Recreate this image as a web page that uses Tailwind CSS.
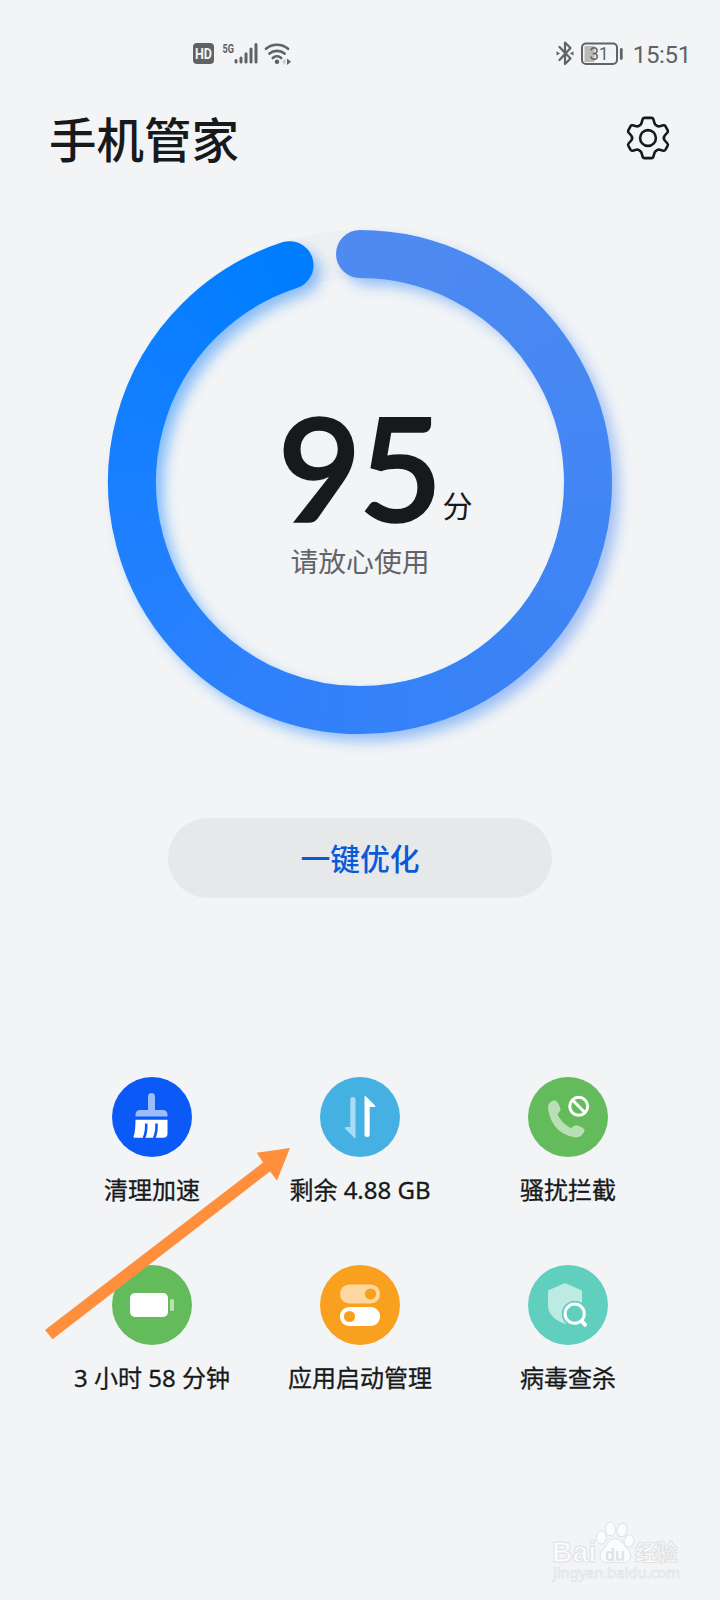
<!DOCTYPE html>
<html lang="zh-CN">
<head>
<meta charset="utf-8">
<title>手机管家</title>
<script src="https://cdn.jsdelivr.net/npm/@tailwindcss/browser@4"></script>
</head>
<body class="bg-[#f2f4f6]">
<div class="relative flex h-[1600px] w-[720px] flex-col overflow-hidden bg-[#f2f4f6] font-['Noto_Sans_CJK_SC',sans-serif] text-[#18191b]">

  <!-- Status bar -->
  <div class="flex h-[106px] items-center justify-between pr-[29px] pl-[192px] text-[#606265]">
    <svg class="h-8 w-[104px]" viewBox="0 0 104 32" fill="currentColor">
      <rect x="1" y="6" width="21" height="21" rx="4"/>
      <text x="11.5" y="22" text-anchor="middle" font-family="Roboto" font-weight="700" font-size="15" fill="#f2f4f6" textLength="17" lengthAdjust="spacingAndGlyphs">HD</text>
      <text x="30.500" y="15.500" font-family="Roboto" font-weight="700" font-size="13.500" textLength="11.500" lengthAdjust="spacingAndGlyphs">5G</text>
      <g stroke="currentColor" stroke-width="3" stroke-linecap="round"><path d="M44 25v-1.500M49 25v-4M54 25v-8.200M59 25V12M64 25V7.500"/></g>
      <g fill="none" stroke="currentColor" stroke-width="2.700" stroke-linecap="round"><path d="M74 11.800a17 17 0 0 1 22 0M77.500 16.600a11.500 11.500 0 0 1 15 0M80.800 21a6.500 6.500 0 0 1 8.400 0"/></g>
      <circle cx="85" cy="24.700" r="2.300"/>
      <path d="M95 21.500l4 3.200-4 3.200z"/><path d="M93.500 21.500l-3.500 3.200 3.500 3.200z" opacity=".3"/>
    </svg>
    <div class="flex items-center">
      <svg class="h-8 w-[70px]" viewBox="0 0 70 32" fill="none" stroke="currentColor" stroke-width="2.200">
        <path d="M6.500 10l11 11.500L12 27V5.500l5.500 5.500L6.500 23" stroke-linejoin="round" stroke-linecap="round"/>
        <path d="M3.500 14.300l3.600 2.100-3.600 2.100zM20.500 14.300l-3.600 2.100 3.600 2.100z" fill="currentColor" stroke="none"/>
        <rect x="31.500" y="9" width="10" height="16" fill="#b9babc" stroke="none"/>
        <rect x="29" y="6.500" width="35" height="20.500" rx="4" stroke-width="2"/>
        <path d="M68.300 12.500v9" stroke-width="2.800" stroke-linecap="round"/>
        <text x="46" y="22.800" text-anchor="middle" font-family="Roboto" font-size="18" fill="currentColor" stroke="none" textLength="19" lengthAdjust="spacingAndGlyphs">31</text>
      </svg>
      <span class="ml-[10px] pt-[3px] font-['Roboto'] text-[24px] leading-8 tracking-[-0.3px]">15:51</span>
    </div>
  </div>

  <!-- Header -->
  <div class="flex h-16 items-center justify-between pr-12 pl-[49px]">
    <h1 class="text-[47.500px] leading-[64px] font-medium">手机管家</h1>
    <svg class="h-12 w-12" viewBox="0 0 48 48" fill="none" stroke="#18191b" stroke-width="2.600" stroke-linejoin="round">
      <path d="M18.700 5.200Q19.100 3.900 20.400 3.900H27.600Q28.900 3.900 29.300 5.200L30.600 9.400Q31 10.600 32 11.200L33.500 12.100Q34.500 12.600 35.700 12.300L39.400 11.300Q40.700 11 41.400 12.100L43.700 16.300Q44.300 17.500 43.400 18.500L40.800 21.500Q38.800 24 40.800 26.500L43.400 29.500Q44.300 30.500 43.700 31.700L41.400 35.900Q40.700 37 39.400 36.700L35.700 35.700Q34.500 35.400 33.500 35.900L32 36.800Q31 37.400 30.600 38.600L29.300 42.800Q28.900 44.100 27.600 44.100H20.400Q19.100 44.100 18.700 42.800L17.400 38.600Q17 37.400 16 36.800L14.500 35.900Q13.500 35.400 12.300 35.700L8.600 36.700Q7.300 37 6.600 35.900L4.300 31.700Q3.700 30.500 4.600 29.500L7.200 26.500Q9.200 24 7.200 21.500L4.600 18.500Q3.700 17.500 4.300 16.300L6.600 12.100Q7.300 11 8.600 11.300L12.300 12.300Q13.500 12.600 14.500 12.100L16 11.200Q17 10.600 17.400 9.400Z"/>
      <circle cx="24" cy="24" r="7.900"/>
    </svg>
  </div>

  <!-- Score ring -->
  <div class="mt-[12px] ml-[60px] grid size-[600px]">
    <svg class="col-start-1 row-start-1 size-[600px]" viewBox="0 0 600 600">
      <defs>
        <filter id="soft" filterUnits="userSpaceOnUse" x="0" y="0" width="600" height="600"><feGaussianBlur stdDeviation="7"/></filter>
        <mask id="arc" maskUnits="userSpaceOnUse" x="0" y="0" width="600" height="600"><path d="M300 72A228 228 0 1 1 229.540 83.160" fill="none" stroke="#fff" stroke-width="48" stroke-linecap="round"/></mask>
        <linearGradient id="glow" x1="0" y1="0" x2="1" y2="0"><stop offset="0" stop-color="#007dff"/><stop offset="1" stop-color="#4a87f2"/></linearGradient>
      </defs>
      <circle cx="300" cy="300" r="228" fill="none" stroke="#eeeff1" stroke-width="48"/>
      <path d="M300 72A228 228 0 1 1 229.540 83.160" transform="translate(8 8)" fill="none" stroke="url(#glow)" stroke-width="46" stroke-linecap="round" filter="url(#soft)" opacity=".48"/>
      <foreignObject x="0" y="0" width="600" height="600" mask="url(#arc)">
        <div class="h-[600px] w-[600px] bg-[conic-gradient(#4f8af0_0%,#4587f3_20%,#3b83f5_38%,#2f80fc_58%,#1980ff_75%,#007dff_94%,#007dff_97%,#4f8af0_97%)]"></div>
      </foreignObject>
    </svg>
    <div class="z-10 col-start-1 row-start-1 flex flex-col items-center pt-[228px]">
      <div class="ml-[30px] flex h-[112px] items-end">
        <span class="h-[112px] font-['Lato'] text-[145px] leading-[112px] font-semibold tracking-[-3px] [-webkit-text-stroke:1.500px_#18191b]">95</span>
        <span class="ml-[3px] text-[30px] leading-[36px]">分</span>
      </div>
      <div class="mt-[18px] text-[27.800px] leading-10 text-[#626468]">请放心使用</div>
    </div>
  </div>

  <div class="mt-[36px] flex justify-center">
    <button class="h-20 w-[384px] rounded-full bg-[#e6e8ea] pb-[1px] text-[29.800px] font-medium text-[#0a59d6]">一键优化</button>
  </div>

  <!-- Tools -->
  <div class="mt-[179px] grid grid-cols-3 gap-y-[68px] px-12 font-['Noto_Sans','Noto_Sans_CJK_SC',sans-serif] text-[24px] leading-[36px] [-webkit-text-stroke:0.3px_#18191b]">
    <div class="flex h-[120px] flex-col items-center gap-[15px]">
      <svg class="size-20 shrink-0" viewBox="0 0 80 80">
        <circle cx="40" cy="40" r="40" fill="#0b59f7"/>
        <path d="M36 19.500a3.500 3.500 0 0 1 7 0V33h7.500q5 0 5 5v1.500h-32V38q0-5 5-5H36z" fill="#9dbcfc"/>
        <path d="M23.500 42.800h32v14q0 4-4.500 4H23q-2 0-1.200-2 1.700-5 1.700-16z" fill="#fff"/>
        <path d="M34.200 46.500q.4 9-2.400 14.600M44.500 46.500q.4 9-2.400 14.600" stroke="#0b59f7" stroke-width="2.600" fill="none"/>
      </svg>
      <span class="flex h-[36px] items-center whitespace-nowrap">清理加速</span>
    </div>
    <div class="flex h-[120px] flex-col items-center gap-[15px]">
      <svg class="size-20 shrink-0" viewBox="0 0 80 80">
        <circle cx="40" cy="40" r="40" fill="#45b1e2"/>
        <path d="M30.300 22.500q0-2.500 2.600-2.500t2.600 2.500v38q0 1-1 .5l-9.300-9.300q-1-1.700 1-1.700h4.100z" fill="#a9dbf3"/>
        <path d="M49.700 57.500q0 2.500-2.600 2.500t-2.600-2.500V20q0-1.500 1.200-.8l9.300 9.300q1 1.500-1 1.500h-4.300z" fill="#fff"/>
      </svg>
      <span class="flex h-[36px] items-center whitespace-nowrap">剩余 4.88 GB</span>
    </div>
    <div class="flex h-[120px] flex-col items-center gap-[15px]">
      <svg class="size-20 shrink-0" viewBox="0 0 80 80">
        <circle cx="40" cy="40" r="40" fill="#64bb5c"/>
        <path d="M25.300 23.600q2.700-.8 4.200 1.700l2.600 5q1.200 2.500-.8 4.700l-1.800 2.200q3.700 8.800 13.300 14l3.200-2.200q2-1.500 4.500-.3l4.300 2.300q2.500 1.500 1.300 4-3 6.300-9.800 5.300Q25 56.500 20.300 33.500q-1.600-7.700 5-9.900z" fill="#b9e0b5"/>
        <circle cx="50.700" cy="29.300" r="9" fill="none" stroke="#fff" stroke-width="3"/><path d="M44.300 22.900l12.800 12.800" stroke="#fff" stroke-width="3"/>
      </svg>
      <span class="flex h-[36px] items-center whitespace-nowrap">骚扰拦截</span>
    </div>
    <div class="flex h-[120px] flex-col items-center gap-[15px]">
      <svg class="size-20 shrink-0" viewBox="0 0 80 80">
        <circle cx="40" cy="40" r="40" fill="#64bb5c"/>
        <rect x="18" y="28" width="38" height="24" rx="5" fill="#fff"/><rect x="58" y="34" width="4" height="12" rx="1.500" fill="#b9e0b5"/>
      </svg>
      <span class="flex h-[36px] items-center whitespace-nowrap">3 小时 58 分钟</span>
    </div>
    <div class="flex h-[120px] flex-col items-center gap-[15px]">
      <svg class="size-20 shrink-0" viewBox="0 0 80 80">
        <circle cx="40" cy="40" r="40" fill="#f9a01e"/>
        <rect x="20" y="19.500" width="40" height="19" rx="9" fill="#fdd6a0"/><circle cx="50.500" cy="29" r="5.600" fill="#f9a01e"/>
        <rect x="20" y="42" width="40" height="19" rx="9" fill="#fff"/><circle cx="29.500" cy="51.500" r="5.600" fill="#f9a01e"/>
      </svg>
      <span class="flex h-[36px] items-center whitespace-nowrap">应用启动管理</span>
    </div>
    <div class="flex h-[120px] flex-col items-center gap-[15px]">
      <svg class="size-20 shrink-0" viewBox="0 0 80 80">
        <circle cx="40" cy="40" r="40" fill="#61cfbe"/>
        <path d="M36 18.400q1-.5 2 0L53 25q1 .5 1 1.500V40q0 13-16.500 19Q20 53 20 40V26.500q0-1 1-1.500z" fill="#bdebe3"/>
        <circle cx="46.700" cy="48.700" r="13" fill="#61cfbe"/>
        <circle cx="46.700" cy="48.700" r="9.600" fill="none" stroke="#fff" stroke-width="3"/><path d="M54 56.200l3 3.600" stroke="#fff" stroke-width="4" stroke-linecap="round"/>
      </svg>
      <span class="flex h-[36px] items-center whitespace-nowrap">病毒查杀</span>
    </div>
  </div>

  <!-- Annotation arrow -->
  <svg class="absolute top-[1140px] left-[40px] h-[210px] w-[260px]" viewBox="40 1140 260 210">
    <path d="M45 1330L263 1162.500 256.700 1152.700 290 1148 277 1180.500 270 1171.500 52.500 1339.300z" fill="#ff8f3c"/>
  </svg>

  <!-- Watermark -->
  <svg class="absolute top-[1510px] left-[540px] h-20 w-40" viewBox="0 0 160 80" fill="#fbfcfd" stroke="#dfe1e3" stroke-width="1">
    <text x="12" y="52" font-family="Liberation Sans" font-weight="700" font-size="29" textLength="44" lengthAdjust="spacingAndGlyphs">Bai</text>
    <ellipse cx="61.500" cy="27.500" rx="5" ry="6.500"/><ellipse cx="70.500" cy="19" rx="5" ry="6.800"/><ellipse cx="82" cy="20" rx="5" ry="6.800" transform="rotate(12 82 20)"/><ellipse cx="89" cy="31" rx="5" ry="6.300" transform="rotate(15 89 31)"/>
    <path d="M75 28.500q5 0 8.500 5.500 2 3 5.500 6.500 3 4 1 8-2.500 5-9 4-6-1.200-12 0-6.500 1-8.500-4-1.800-4.500 2-8.500 3-3 4.500-6 3-5.500 8-5.500z"/>
    <text x="75" y="50.500" text-anchor="middle" font-family="Liberation Sans" font-weight="700" font-size="19" textLength="20" lengthAdjust="spacingAndGlyphs" fill="#dfe1e3" stroke="none">du</text>
    <text x="95" y="50" font-family="Noto Sans CJK SC" font-weight="700" font-size="22" textLength="43">经验</text>
    <text x="13" y="67.500" font-family="Noto Sans" font-size="15" textLength="127" lengthAdjust="spacingAndGlyphs" stroke-width=".7">jingyan.baidu.com</text>
  </svg>
</div>
</body>
</html>
